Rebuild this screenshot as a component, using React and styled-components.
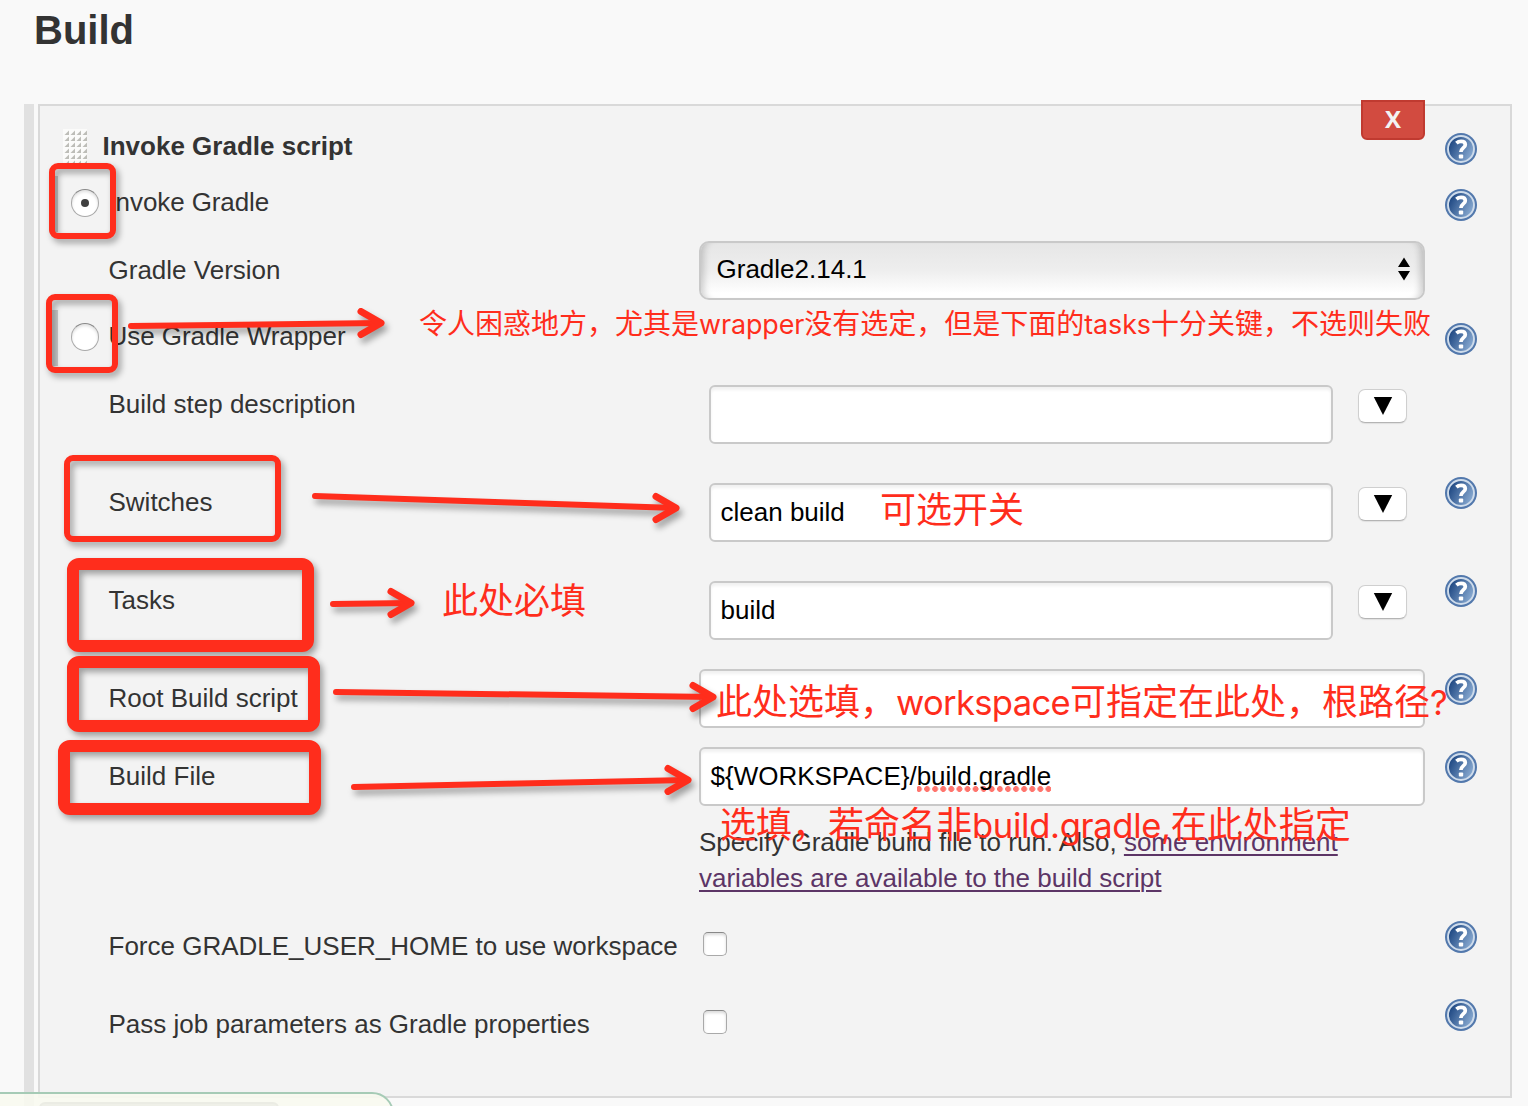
import React from 'react';
import styled, { createGlobalStyle } from 'styled-components';

const RED = '#ff2d1c';

const Global = createGlobalStyle`
  *, *::before, *::after { box-sizing: border-box; }
  html, body { margin: 0; height: 1106px; overflow: hidden; background: #f9f9f9; }
  body { font-family: "Liberation Sans", Arial, sans-serif; font-size: 26px; line-height: 36px; color: #333; }
`;

const Page = styled.main`
  position: relative;
  width: 1528px;
  height: 1106px;
  overflow: hidden;
  display: flex;
  flex-direction: column;
`;

const Heading = styled.h1`
  margin: 0;
  height: 104px;
  flex: none;
  padding: 7px 0 0 34px;
  font-size: 40px;
  line-height: 46px;
`;

const Section = styled.section`
  display: flex;
  flex: 1;
  padding: 0 16px 0 24px;
`;

const DragBar = styled.div`
  width: 10px;
  margin-right: 4px;
  background: #e1e1e1;
`;

const Panel = styled.form`
  position: relative;
  flex: 1;
  height: 994px;
  padding: 22px 33px 0 23px;
  border: 2px solid #d9d9d9;
  background: #f3f3f3;
`;

const DeleteButton = styled.button`
  position: absolute;
  top: -6px;
  right: 85px;
  width: 64px;
  height: 40px;
  padding: 0;
  border: 2px solid #c03a30;
  border-radius: 0 0 6px 6px;
  background: #d24b40;
  color: #f3f3f3;
  font: bold 24px/34px "Open Sans", sans-serif;
  padding-bottom: 2px;
`;

const Row = styled.div`
  display: grid;
  grid-template-columns: 46px 590px 726px 1fr;
  height: ${(p) => p.$h}px;
`;

const Lead = styled.div`
  padding-top: ${(p) => p.$top || 0}px;
  padding-left: ${(p) => p.$left || 0}px;
  line-height: 0;
`;

const Label = styled.label`
  padding-top: ${(p) => p.$top || 0}px;
  margin-left: ${(p) => (p.$bold ? -6.5 : -0.5)}px;
  font-weight: ${(p) => (p.$bold ? 700 : 400)};
  letter-spacing: ${(p) => p.$track || 0}px;
  white-space: nowrap;
`;

const Field = styled.div`
  padding-top: ${(p) => p.$top || 0}px;
  display: flex;
  flex-wrap: wrap;
  align-content: flex-start;
  align-items: flex-start;
`;

const HelpCell = styled.div`
  padding: ${(p) => p.$top || 0}px 0 0 20px;
  line-height: 0;
`;

const Radio = styled.span`
  display: flex;
  align-items: center;
  justify-content: center;
  width: 28px;
  height: 28px;
  border: 1px solid #a9a9a9;
  border-top-color: #888;
  border-radius: 50%;
  background: #fff;
  box-shadow: inset 0 2px 3px rgba(0, 0, 0, 0.12);
  &::after {
    content: "";
    width: 8px;
    height: 8px;
    border-radius: 50%;
    background: ${(p) => (p.$on ? '#404040' : 'transparent')};
  }
`;

const Select = styled.div`
  display: flex;
  justify-content: space-between;
  align-items: center;
  width: 726px;
  height: 59px;
  padding: 0 13px 4px 15.5px;
  border: 2px solid #c9c9c9;
  border-radius: 10px;
  background: linear-gradient(#e6e6e6, #eee 50%, #fff 92%);
  box-shadow: inset 9px 0 7px -6px rgba(0, 0, 0, 0.18), inset -9px 0 7px -6px rgba(0, 0, 0, 0.18);
  color: #000;
`;

const Input = styled.div`
  width: ${(p) => (p.$narrow ? 624 : 726)}px;
  height: 59px;
  margin-left: ${(p) => (p.$narrow ? 10 : 0)}px;
  padding: 9px 9.5px;
  border: 2px solid #c9c9c9;
  border-radius: 6px;
  background: #fff;
  box-shadow: inset 0 3px 3px rgba(0, 0, 0, 0.06);
  color: #000;
  white-space: nowrap;
`;

const Misspelled = styled.span`
  padding-bottom: 1px;
  background: radial-gradient(circle at 3px 3px, rgba(255, 70, 60, 0.75) 2.6px, transparent 3.2px) -1px 100% / 8.1px 6px repeat-x;
`;

const ExpandButton = styled.button`
  display: flex;
  justify-content: center;
  align-items: center;
  width: 49px;
  height: 34px;
  margin: 4px 0 0 25px;
  padding: 0;
  border: 1px solid #cfcfcf;
  border-bottom-color: #b4b4b4;
  border-radius: 7px;
  background: #fff;
  box-shadow: 0 1px 1px rgba(0, 0, 0, 0.08);
`;

const Checkbox = styled.span`
  width: 24px;
  height: 24px;
  margin-left: 4px;
  border: 1px solid #a9a9a9;
  border-top-color: #888;
  border-radius: 5px;
  background: #fff;
  box-shadow: inset 0 2px 3px rgba(0, 0, 0, 0.15);
`;

const Hint = styled.p`
  margin: 18px 0 0;
  width: 726px;
  white-space: nowrap;
`;

const Link = styled.a`
  color: #5c3566;
  text-decoration: underline;
  text-decoration-thickness: 2px;
  text-underline-offset: 3px;
`;

const StatusBubble = styled.div`
  position: absolute;
  left: -4px;
  top: 1092px;
  width: 398px;
  height: 40px;
  padding: 8px 0 0 43px;
  border: 2px solid #a6cbb6;
  border-radius: 0 22px 0 0;
  background: rgba(248, 249, 240, 0.9);
`;

const StatusItem = styled.div`
  width: 240px;
  height: 30px;
  margin-left: -2px;
  border: 2px solid #ebece4;
  border-radius: 6px;
  background: #eff0e8;
`;

const Overlay = styled.div`
  position: absolute;
  inset: 0;
  pointer-events: none;
`;

const SideMark = styled.div`
  position: absolute;
  left: ${(p) => p.$x}px;
  top: ${(p) => p.$y}px;
  width: ${(p) => 58 - p.$x}px;
  height: 56px;
  background: #c9c9c9;
`;

const Frame = styled.div`
  position: absolute;
  left: ${(p) => p.$x}px;
  top: ${(p) => p.$y}px;
  width: ${(p) => p.$w}px;
  height: ${(p) => p.$h}px;
  border: ${(p) => p.$b}px solid ${RED};
  border-radius: ${(p) => (p.$b > 6 ? 12 : 9)}px;
  filter: drop-shadow(3px 4px 3px rgba(0, 0, 0, 0.35));
`;

const ArrowLayer = styled.svg`
  position: absolute;
  inset: 0;
  filter: drop-shadow(3px 5px 3px rgba(0, 0, 0, 0.35));
`;

const Note = styled.div`
  position: absolute;
  left: ${(p) => p.$x}px;
  top: ${(p) => p.$y}px;
  font-family: "Noto Sans CJK SC", sans-serif;
  font-size: ${(p) => p.$size}px;
  line-height: 44px;
  color: ${RED};
  white-space: nowrap;
`;

const Latin = styled.span`
  font-family: Inter, sans-serif;
  font-size: 0.96em;
  line-height: 1;
  letter-spacing: ${(p) => p.$track || 0}px;
`;

const GRIP_ROWS = [0, 1, 2, 3, 4, 5];
const GRIP_COLS = [0, 1, 2, 3];

function Grip() {
  return (
    <svg width="24" height="36" viewBox="0 0 24 36">
      <rect width="24" height="36" fill="#fbfbfa" />
      {GRIP_ROWS.map((r) => GRIP_COLS.map((c) => (
        <path key={`${r}-${c}`} transform={`translate(${c * 6} ${r * 6})`} d="M1.5 6 6 1.5V6Z" fill="#bdbdb8" />
      )))}
    </svg>
  );
}

function Help({ top }) {
  return (
    <HelpCell $top={top}>
      <svg width="32" height="32" viewBox="0 0 32 32">
        <defs>
          <linearGradient id="helpFill" x1="0" y1="0.25" x2="1" y2="0.75">
            <stop offset="0.1" stopColor="#234c86" />
            <stop offset="1" stopColor="#8fb0d6" />
          </linearGradient>
        </defs>
        <circle cx="16" cy="16" r="16" fill="#5278ac" />
        <circle cx="16" cy="16" r="13" fill="url(#helpFill)" stroke="#cfdceb" strokeWidth="1.9" />
        <path d="M11.4 10.2c1.3-1.2 2.9-1.8 4.6-1.8 2.7 0 4.3 1.3 4.3 3.3 0 3.3-4.4 3.3-4.4 7.4" fill="none" stroke="#fff" strokeWidth="3.7" />
        <rect x="13.8" y="21.4" width="4.4" height="4.2" rx="1" fill="#fff" />
      </svg>
    </HelpCell>
  );
}

function Expand() {
  return (
    <ExpandButton type="button">
      <svg width="20" height="18" viewBox="0 0 20 18"><path d="M0.8 0H19.2L10 18Z" fill="#000" /></svg>
    </ExpandButton>
  );
}

const arrows = [
  [131, 326, 381, 323],
  [315, 496, 676, 508],
  [333, 604, 411, 603],
  [336, 692, 713, 697],
  [354, 787, 688, 780],
];

export default function App() {
  return (
    <Page>
      <Global />
      <Heading>Build</Heading>
      <Section>
        <DragBar />
        <Panel>
          <DeleteButton type="button">X</DeleteButton>
          <Row $h={56}>
            <Lead $top={1}><Grip /></Lead>
            <Label $bold>Invoke Gradle script</Label>
            <span />
            <Help top={5} />
          </Row>
          <Row $h={57}>
            <Lead $top={5} $left={8}><Radio $on /></Lead>
            <Label $track={-0.1}>Invoke Gradle</Label>
            <span />
            <Help top={5} />
          </Row>
          <Row $h={77}>
            <span />
            <Label $top={11}>Gradle Version</Label>
            <Field>
              <Select>
                Gradle2.14.1
                <svg width="12" height="24" viewBox="0 0 12 24"><path d="M0 10 6 .5 12 10ZM0 14H12L6 23.5Z" fill="#000" /></svg>
              </Select>
            </Field>
          </Row>
          <Row $h={61}>
            <Lead $top={5} $left={8}><Radio /></Lead>
            <Label $track={-0.05}>Use Gradle Wrapper</Label>
            <span />
            <Help top={5} />
          </Row>
          <Row $h={98}>
            <span />
            <Label $top={7}>Build step description</Label>
            <Field $top={6}><Input $narrow /><Expand /></Field>
          </Row>
          <Row $h={98}>
            <span />
            <Label $top={7}>Switches</Label>
            <Field $top={6}><Input $narrow>clean build</Input><Expand /></Field>
            <Help />
          </Row>
          <Row $h={94}>
            <span />
            <Label $top={7}>Tasks</Label>
            <Field $top={6}><Input $narrow>build</Input><Expand /></Field>
            <Help />
          </Row>
          <Row $h={78}>
            <span />
            <Label $top={11}>Root Build script</Label>
            <Field><Input /></Field>
            <Help top={4} />
          </Row>
          <Row $h={170}>
            <span />
            <Label $top={11}>Build File</Label>
            <Field>
              <Input>{'${WORKSPACE}/'}<Misspelled>build.gradle</Misspelled></Input>
              <Hint>
                Specify Gradle build file to run. Also, <Link>some environment</Link>
                <br />
                <Link>variables are available to the build script</Link>
              </Hint>
            </Field>
            <Help top={4} />
          </Row>
          <Row $h={78}>
            <span />
            <Label $top={11}>Force GRADLE_USER_HOME to use workspace</Label>
            <Field $top={15}><Checkbox /></Field>
            <Help top={4} />
          </Row>
          <Row $h={78}>
            <span />
            <Label $top={11}>Pass job parameters as Gradle properties</Label>
            <Field $top={15}><Checkbox /></Field>
            <Help top={4} />
          </Row>
        </Panel>
      </Section>
      <StatusBubble><StatusItem /></StatusBubble>
      <Overlay>
        <SideMark $x={49} $y={176} />
        <SideMark $x={50} $y={310} />
        <Frame $x={49} $y={163} $w={67} $h={76} $b={6} />
        <Frame $x={46} $y={294} $w={72} $h={79} $b={6} />
        <Frame $x={64} $y={455} $w={217} $h={87} $b={6} />
        <Frame $x={67} $y={558} $w={247} $h={94} $b={12} />
        <Frame $x={67} $y={656} $w={253} $h={76} $b={12} />
        <Frame $x={58} $y={740} $w={263} $h={75} $b={12} />
        <ArrowLayer width="1528" height="1106" fill="none" stroke={RED} strokeLinecap="round" strokeLinejoin="round">
          {arrows.map(([x1, y1, x2, y2]) => (
            <g key={y1}>
              <path d={`M${x1} ${y1}L${x2} ${y2}`} strokeWidth="6" />
              <path d={`M${x2 - 20} ${y2 - 11.5}L${x2} ${y2}L${x2 - 20} ${y2 + 11.5}`} strokeWidth="7" />
            </g>
          ))}
        </ArrowLayer>
        <Note $x={419} $y={300} $size={28}>
          令人困惑地方，尤其是<Latin $track={-0.1}>wrapper</Latin>没有选定，但是下面的<Latin $track={-0.1}>tasks</Latin>十分关键，不选则失败
        </Note>
        <Note $x={880} $y={485} $size={36}>可选开关</Note>
        <Note $x={442} $y={576} $size={36}>此处必填</Note>
        <Note $x={716} $y={677} $size={36}>
          此处选填，<Latin $track={-0.65}>workspace</Latin>可指定在此处，根路径<Latin>?</Latin>
        </Note>
        <Note $x={720} $y={800} $size={36}>
          选填，若命名非<Latin $track={-0.3}>build.gradle,</Latin>在此处指定
        </Note>
      </Overlay>
    </Page>
  );
}
